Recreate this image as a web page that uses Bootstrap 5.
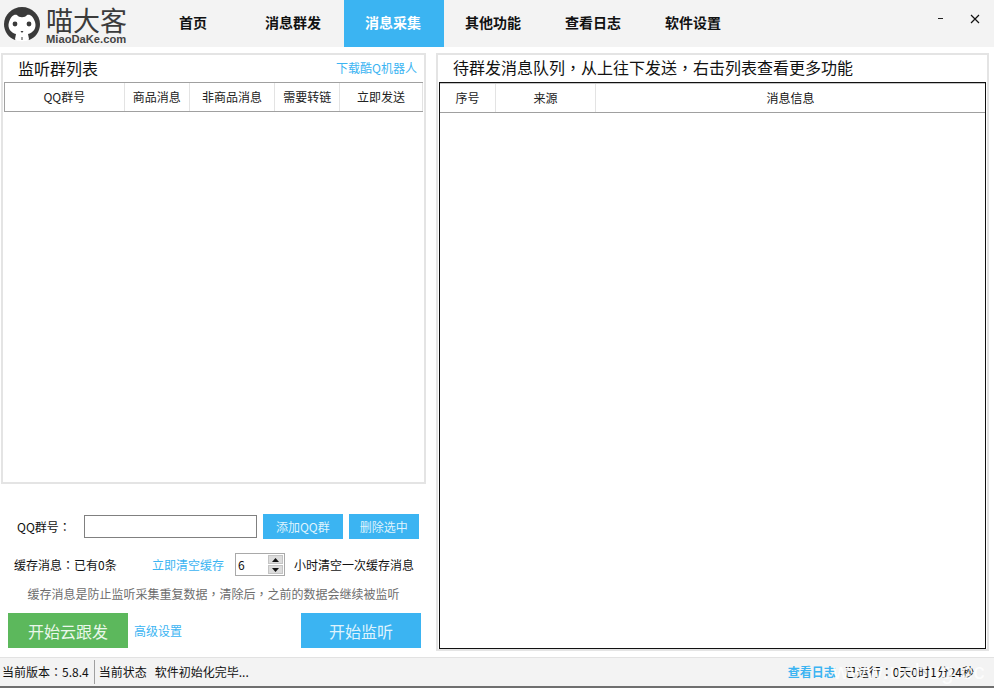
<!DOCTYPE html>
<html lang="zh-CN"><head><meta charset="utf-8"><title>喵大客</title>
<link rel="stylesheet" href="https://cdn.jsdelivr.net/npm/bootstrap@5.3.0/dist/css/bootstrap.min.css">
<style>
html,body{height:100%;overflow:hidden}
body{font-family:"Noto Sans CJK SC","Liberation Sans",sans-serif;font-size:12px;color:#111;background:#fff;width:994px;height:689px}
.pn{font-family:"Noto Sans CJK TC",sans-serif}
.app-shell{height:689px}
.top-bar{height:47px;background:#f3f3f3;flex:none}
.brand{width:144px;padding:6px 0 0 4px;gap:6px}
.brand-cn{font-size:27px;line-height:27px;height:28px;color:#3b3b3b;font-weight:400;white-space:nowrap}
.brand-en{font-size:11.2px;line-height:10px;font-weight:700;color:#444;font-family:"Liberation Sans",sans-serif;white-space:nowrap}
.tab-item{width:100px;height:47px;font-size:14px;font-weight:700;color:#111;padding:0 2px 2px 0}
.tab-on{background:#3bb4f2;color:#fff}
.win-min{position:absolute;left:938px;top:18px;width:5px;height:1px;background:#222}
.win-x{left:970px;top:14px}
.work{height:610px;padding:6px 5px 0 1px;gap:10px}
.left-col{width:425px}
.pane-a{height:431px;border:2px solid #e4e4e4;flex:none}
.pane-head-a{height:27px;padding:0 7px 2px 15px}
.ttl{font-size:16px;line-height:26px;color:#111}
.lnk{color:#3bb4f2;text-decoration:none}
.grid-a{height:30px;margin:0 1px;border-top:1px solid #a0a0a0;border-bottom:1px solid #a0a0a0;border-left:1px solid #a0a0a0}
.cell{border-right:1px solid #e3e3e3;font-size:12px;color:#222;height:100%}
.controls{padding-top:30px}
.row-qq{padding-left:16px;height:25px}
.qq-field{width:173px;height:23px;border:1px solid #808080;margin-left:13px;padding:0}
.btn-sky{background:#3bb4f2;color:#dff3fd;border:0;border-radius:0;font-size:12px;padding:0;height:25px}
.btn-sky:hover{background:#3bb4f2;color:#dff3fd}
.btn-add{width:80px;margin-left:6px}
.btn-del{width:70px;margin-left:6px}
.row-cache{padding-left:13px;height:23px;margin-top:14px}
.cache-a{width:138px}
.spin{width:50px;height:23px;border:1px solid #a9a9a9;margin:0 9px 0 11px;padding:0 1px 0 2px;font-size:12px;color:#111}
.spin-btns{gap:1px}
.spin-b{width:15px;height:9px;background:#dcdcdc;border:1px solid #c4c4c4}
.hint{color:#6d6d6d;text-align:center;height:18px;margin-top:9px;line-height:18px}
.row-go{padding:0 5px 0 7px;margin-top:10px}
.btn-green{width:120px;height:35px;background:#5cb85c;color:#eaf7ea;border:0;border-radius:0;font-size:16px;padding:0}
.btn-green:hover{background:#5cb85c;color:#eaf7ea}
.btn-go{width:120px;height:35px;font-size:16px}
.adv{margin-left:6px}
.pane-b{width:553px;height:598px;border:2px solid #e4e4e4;padding:0 1px 0 1px}
.ttl-b{height:27px;padding-left:14px;flex:none;line-height:24px}
.frame{border:1px solid #111}
.grid-b{height:30px;border-top:1px solid #c4c4c4;border-bottom:1px solid #a0a0a0;flex:none}
.status{height:31px;background:#f3f3f3;border-top:1px solid #e2e2e2;border-bottom:2px solid #6f6f6f;flex:none;font-size:12px;color:#111}
.ver{padding-left:2px}
.st-sep{width:1px;height:24px;background:#a0a0a0;margin:0 4px 0 5px}
.st-log{font-weight:700;margin-left:auto}
.st-run{margin:0 20px 0 9px}
.wm{color:rgba(255,255,255,.8);font-size:22px;font-family:"Liberation Sans",sans-serif;position:absolute;left:833px;top:-3px;letter-spacing:1px;white-space:nowrap}
</style></head><body>
<div class="app-shell d-flex flex-column position-relative">
 <header class="top-bar d-flex">
  <div class="brand d-flex align-items-start">
   <svg width="36" height="36" viewBox="0 0 36 36" aria-hidden="true"><path fill="#3a3a3a" d="M18 1 C28 1 36 9 36 18 C36 26 31 32 25 34 L11 34 C5 32 0 26 0 18 C0 9 8 1 18 1Z"/><path fill="#fff" d="M5 16 C7 10 10 8 13 9 C15 12 21 12 23 9 C26 8 29 10 31 16 C33 22 29 27 24 28 L25 33 C25 36 11 36 11 33 L12 28 C7 27 3 22 5 16Z"/><circle cx="11" cy="18" r="2.400" fill="#3a3a3a"/><circle cx="25" cy="18" r="2.400" fill="#3a3a3a"/><path fill="#3a3a3a" d="M16.500 25h3l-1.500 2zM17.500 31h1v3h-1z"/></svg>
   <div><div class="brand-cn">喵大客</div><div class="brand-en">MiaoDaKe.com</div></div>
  </div>
  <nav class="d-flex">
   <div class="tab-item d-flex align-items-center justify-content-center">首页</div>
   <div class="tab-item d-flex align-items-center justify-content-center">消息群发</div>
   <div class="tab-item tab-on d-flex align-items-center justify-content-center">消息采集</div>
   <div class="tab-item d-flex align-items-center justify-content-center">其他功能</div>
   <div class="tab-item d-flex align-items-center justify-content-center">查看日志</div>
   <div class="tab-item d-flex align-items-center justify-content-center">软件设置</div>
  </nav>
  <i class="win-min"></i>
  <svg class="win-x position-absolute" width="10" height="10" viewBox="0 0 10 10" aria-hidden="true"><path d="M1 1l8 8M9 1l-8 8" stroke="#111" stroke-width="1.200"/></svg>
 </header>
 <main class="work d-flex">
  <section class="left-col d-flex flex-column">
   <div class="pane-a">
    <div class="pane-head-a d-flex justify-content-between align-items-center">
     <span class="ttl">监听群列表</span><a class="lnk" href="#">下载酷Q机器人</a>
    </div>
    <div class="grid-a d-flex">
     <div class="cell d-flex align-items-center justify-content-center" style="width:120px">QQ群号</div>
     <div class="cell d-flex align-items-center justify-content-center" style="width:65px">商品消息</div>
     <div class="cell d-flex align-items-center justify-content-center" style="width:86px">非商品消息</div>
     <div class="cell d-flex align-items-center justify-content-center" style="width:65px">需要转链</div>
     <div class="cell d-flex align-items-center justify-content-center" style="width:83px">立即发送</div>
    </div>
   </div>
   <div class="controls">
    <div class="row-qq d-flex align-items-center">
     <span>QQ群号<span class="pn" lang="zh-TW">：</span></span><input class="qq-field" aria-label="QQ群号">
     <button class="btn btn-sky btn-add">添加QQ群</button><button class="btn btn-sky btn-del">删除选中</button>
    </div>
    <div class="row-cache d-flex align-items-center">
     <span class="cache-a">缓存消息<span class="pn" lang="zh-TW">：</span>已有0条</span><a class="lnk" href="#">立即清空缓存</a>
     <div class="spin d-flex align-items-center justify-content-between"><span>6</span>
      <div class="spin-btns d-flex flex-column">
       <div class="spin-b d-flex align-items-center justify-content-center"><svg width="7" height="4" viewBox="0 0 7 4" aria-hidden="true"><path d="M3.500 0L7 4H0z" fill="#111"/></svg></div>
       <div class="spin-b d-flex align-items-center justify-content-center"><svg width="7" height="4" viewBox="0 0 7 4" aria-hidden="true"><path d="M3.500 4L7 0H0z" fill="#111"/></svg></div>
      </div></div>
     <span>小时清空一次缓存消息</span>
    </div>
    <div class="hint">缓存消息是防止监听采集重复数据<span class="pn" lang="zh-TW">，</span>清除后<span class="pn" lang="zh-TW">，</span>之前的数据会继续被监听</div>
    <div class="row-go d-flex align-items-center">
     <button class="btn btn-green">开始云跟发</button><a class="lnk adv" href="#">高级设置</a>
     <button class="btn btn-sky btn-go ms-auto">开始监听</button>
    </div>
   </div>
  </section>
  <section class="pane-b d-flex flex-column">
   <div class="ttl ttl-b">待群发消息队列<span class="pn" lang="zh-TW">，</span>从上往下发送<span class="pn" lang="zh-TW">，</span>右击列表查看更多功能</div>
   <div class="frame flex-grow-1">
    <div class="grid-b d-flex">
     <div class="cell d-flex align-items-center justify-content-center" style="width:56px">序号</div>
     <div class="cell d-flex align-items-center justify-content-center" style="width:100px">来源</div>
     <div class="d-flex align-items-center justify-content-center flex-grow-1">消息信息</div>
    </div>
   </div>
  </section>
 </main>
 <footer class="status d-flex align-items-center position-relative">
  <span class="ver">当前版本<span class="pn" lang="zh-TW">：</span>5.8.4</span><i class="st-sep"></i><span>当前状态</span><span class="ms-2">软件初始化完毕...</span>
  <a class="lnk st-log" href="#">查看日志</a><span class="st-run">已运行<span class="pn" lang="zh-TW">：</span>0天0时1分24秒</span>
  <span class="wm">www.ucbug.cc</span>
 </footer>
</div>
</body></html>
